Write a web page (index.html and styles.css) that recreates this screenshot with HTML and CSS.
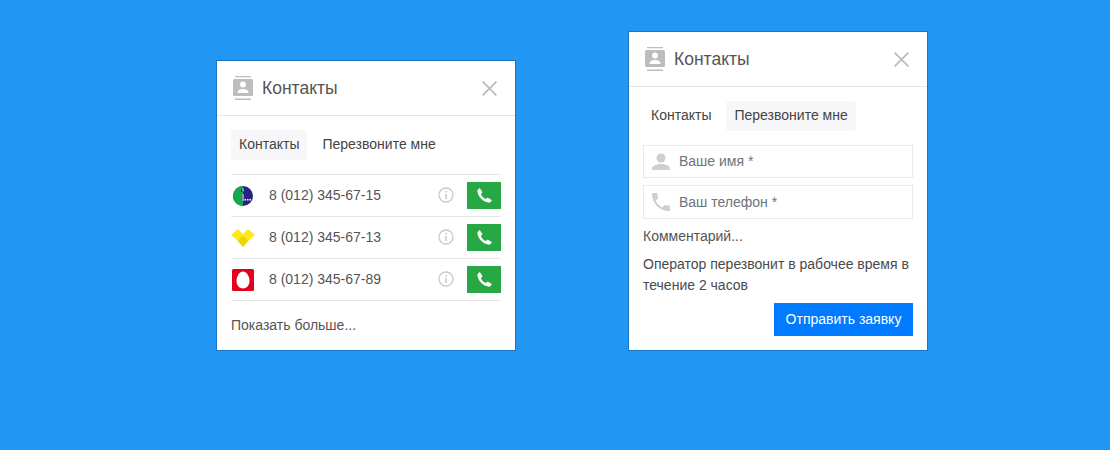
FILE: index.html
```html
<!DOCTYPE html>
<html lang="ru">
<head>
<meta charset="utf-8">
<title>Контакты</title>
<link rel="stylesheet" href="styles.css">
</head>
<body>
<main class="stage">
  <section class="card">
    <header class="head">
      <svg class="book" viewBox="0 0 20 24"><path d="M2 0h16v1.200H2zM2 22.500h16V24H2z" fill="#bdbdbd"/><rect y="3" width="20" height="17" rx="1.500" fill="#bdbdbd"/><circle cx="10" cy="8.500" r="3" fill="#fff"/><path d="M4.500 17c0-3 2.500-4 5.500-4s5.500 1 5.500 4z" fill="#fff"/></svg>
      <h2 class="title">Контакты</h2>
      <svg class="close" viewBox="0 0 15 15"><path d="M.6.6l13.800 13.800M14.400.6L.6 14.400" stroke="#bcbcbc" stroke-width="1.800" fill="none"/></svg>
    </header>
    <div class="tabs">
      <span class="tab active">Контакты</span>
      <span class="tab">Перезвоните мне</span>
    </div>
    <ul class="list">
      <li class="row">
        <svg class="logo" viewBox="-2 -1 24 22"><circle cx="10" cy="10" r="10" fill="#27237f"/><path d="M10 0a10 10 0 0 0 0 20v-5H9V8h1V6H8V3h2z" fill="#12a84c"/><path d="M10 2.500v3M10 8v7" stroke="#fff" stroke-width="1" fill="none"/><path d="M11.500 13h1.500v1.500h-1.500zM14 13h1.500v1.500H14zM16.500 13H18v1.500h-1.500z" fill="#fff"/></svg>
        <span class="phone">8 (012) 345-67-15</span>
        <svg class="info" viewBox="0 0 16 16"><circle cx="8" cy="8" r="7" fill="none" stroke="#c9c9c9" stroke-width="1.300"/><path d="M7.200 7h1.600v5H7.200zM7.200 4h1.600v1.600H7.200z" fill="#c9c9c9"/></svg>
        <a class="call"><svg class="handset" viewBox="0 0 24 24"><path d="M6 2.500l3.500 5.500-2 2c1 3 3.500 5.500 6.500 6.500l2-2 5.500 3.500-3 3C10 21 3 13 3 5.500z" fill="#fff"/></svg></a>
      </li>
      <li class="row">
        <svg class="logo" viewBox="0 0 24 22"><path d="M0 8l7-6 6 6-6 6z" fill="#ffe81a"/><path d="M11 8l6-6 7 6-7 6z" fill="#ffe81a"/><path d="M6.500 14l5.500-5.500 5.500 5.500-5.500 6z" fill="#f0d400"/></svg>
        <span class="phone">8 (012) 345-67-13</span>
        <svg class="info" viewBox="0 0 16 16"><circle cx="8" cy="8" r="7" fill="none" stroke="#c9c9c9" stroke-width="1.300"/><path d="M7.200 7h1.600v5H7.200zM7.200 4h1.600v1.600H7.200z" fill="#c9c9c9"/></svg>
        <a class="call"><svg class="handset" viewBox="0 0 24 24"><path d="M6 2.500l3.500 5.500-2 2c1 3 3.500 5.500 6.500 6.500l2-2 5.500 3.500-3 3C10 21 3 13 3 5.500z" fill="#fff"/></svg></a>
      </li>
      <li class="row">
        <svg class="logo" viewBox="-1 0 24 22"><rect width="22" height="22" rx="1.500" fill="#e2001a"/><path d="M11 2.500c3.500 0 6.500 5 6.500 9.500 0 4.500-3 7.500-6.500 7.500S4.500 16.500 4.500 12c0-4.500 3-9.500 6.500-9.500z" fill="#fff"/></svg>
        <span class="phone">8 (012) 345-67-89</span>
        <svg class="info" viewBox="0 0 16 16"><circle cx="8" cy="8" r="7" fill="none" stroke="#c9c9c9" stroke-width="1.300"/><path d="M7.200 7h1.600v5H7.200zM7.200 4h1.600v1.600H7.200z" fill="#c9c9c9"/></svg>
        <a class="call"><svg class="handset" viewBox="0 0 24 24"><path d="M6 2.500l3.500 5.500-2 2c1 3 3.500 5.500 6.500 6.500l2-2 5.500 3.500-3 3C10 21 3 13 3 5.500z" fill="#fff"/></svg></a>
      </li>
    </ul>
    <p class="more">Показать больше...</p>
  </section>

  <section class="card">
    <header class="head">
      <svg class="book" viewBox="0 0 20 24"><path d="M2 0h16v1.200H2zM2 22.500h16V24H2z" fill="#bdbdbd"/><rect y="3" width="20" height="17" rx="1.500" fill="#bdbdbd"/><circle cx="10" cy="8.500" r="3" fill="#fff"/><path d="M4.500 17c0-3 2.500-4 5.500-4s5.500 1 5.500 4z" fill="#fff"/></svg>
      <h2 class="title">Контакты</h2>
      <svg class="close" viewBox="0 0 15 15"><path d="M.6.6l13.800 13.800M14.400.6L.6 14.400" stroke="#bcbcbc" stroke-width="1.800" fill="none"/></svg>
    </header>
    <div class="tabs">
      <span class="tab">Контакты</span>
      <span class="tab active">Перезвоните мне</span>
    </div>
    <form class="form">
      <label class="field name">
        <svg class="field-icon" viewBox="0 0 24 24"><circle cx="12" cy="8" r="4.500" fill="#cfcfcf"/><path d="M3 20v-1.500c0-3 5-4.500 9-4.500s9 1.500 9 4.500V20z" fill="#cfcfcf"/></svg>
        <span class="hint">Ваше имя *</span>
      </label>
      <label class="field tel">
        <svg class="field-icon" viewBox="0 0 24 24"><path d="M6.600 10.800c1.400 2.800 3.800 5.100 6.600 6.600l2.200-2.200c.3-.3.700-.4 1-.2 1.100.4 2.300.6 3.600.6.600 0 1 .4 1 1V20c0 .6-.4 1-1 1C10.600 21 3 13.400 3 4c0-.6.400-1 1-1h3.500c.6 0 1 .4 1 1 0 1.300.2 2.500.6 3.600.1.300 0 .7-.2 1z" fill="#cfcfcf"/></svg>
        <span class="hint">Ваш телефон *</span>
      </label>
      <p class="comment">Комментарий...</p>
      <p class="note">Оператор перезвонит в рабочее время в течение 2 часов</p>
      <div class="actions"><button class="submit" type="button">Отправить заявку</button></div>
    </form>
  </section>
</main>
</body>
</html>
```
FILE: styles.css
```css
* { box-sizing: border-box; }
html, body { margin: 0; height: 100%; }
body { background: #2196f3; font-family: "Liberation Sans", Arial, sans-serif; font-size: 14px; color: #4a4a4a; overflow: hidden; }
.stage { display: flex; align-items: flex-end; gap: 112px; height: 351px; padding-left: 216px; }
.card { width: 300px; background: #fff; border: 1px solid #1976c4; }
.head { display: flex; align-items: center; height: 55px; padding: 0 18px 0 16px; border-bottom: 1px solid #e6e6e6; }
.book { width: 20px; height: 24px; flex: none; }
.title { flex: 1; margin: 0 0 0 9px; font-size: 17.5px; font-weight: 400; color: #555; }
.close { width: 15px; height: 15px; flex: none; }
.tabs { display: flex; gap: 7px; padding: 14px; }
.tab { padding: 0 8px; height: 30px; line-height: 28px; border-radius: 3px; color: #444; }
.active { background: #f7f7f9; }
.list { list-style: none; margin: 0 14px; padding: 0; border-top: 1px solid #e6e6e6; }
.row { display: flex; align-items: center; height: 42px; border-bottom: 1px solid #e6e6e6; }
.logo { width: 24px; height: 22px; flex: none; }
.phone { flex: 1; margin: 0 0 2px 14px; color: #555; }
.info { width: 16px; height: 16px; flex: none; margin: 0 13px 2px 0; }
.call { display: flex; align-items: center; justify-content: center; width: 34px; height: 27px; background: #28a745; }
.handset { width: 19px; height: 19px; }
.more { margin: 0; padding: 16px 14px; line-height: 17px; color: #555; }
.form { padding: 0 14px 14px; }
.field { display: flex; align-items: center; height: 33px; border: 1px solid #e9e9e9; margin-bottom: 7px; padding-left: 5px; }
.tel { height: 34px; }
.field-icon { width: 24px; height: 24px; flex: none; }
.hint { margin-left: 6px; color: #6c757d; }
.name .hint { margin-bottom: 2px; }
.comment { margin: 9px 0 0; line-height: 17px; color: #555; }
.note { margin: 9px 0 0; line-height: 21px; color: #4a4a4a; }
.actions { display: flex; justify-content: flex-end; margin-top: 7px; }
.submit { width: 139px; height: 33px; border: 0; background: #007bff; color: #fff; font: 400 14px "Liberation Sans", Arial, sans-serif; padding: 0 0 2px; }
```
